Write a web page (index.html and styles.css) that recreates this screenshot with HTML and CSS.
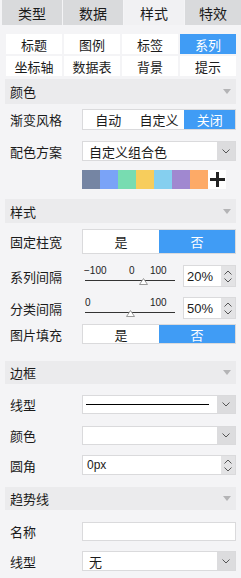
FILE: index.html
```html
<!DOCTYPE html>
<html lang="zh-CN">
<head>
    <meta charset="UTF-8">
    <title>图表样式</title>
    <link rel="stylesheet" href="styles.css">
</head>
<body>
    <div class="tabs">
        <div class="tab">类型</div>
        <div class="tab">数据</div>
        <div class="tab active">样式</div>
        <div class="tab">特效</div>
    </div>

    <div class="panel">
        <div class="subtabs">
            <div class="subtab">标题</div>
            <div class="subtab">图例</div>
            <div class="subtab">标签</div>
            <div class="subtab active">系列</div>
            <div class="subtab">坐标轴</div>
            <div class="subtab">数据表</div>
            <div class="subtab">背景</div>
            <div class="subtab">提示</div>
        </div>

        <!-- 颜色 -->
        <div class="sec-head first">颜色<span class="caret"></span></div>
        <div class="row after-head">
            <div class="label">渐变风格</div>
            <div class="seg h21">
                <span>自动</span><span>自定义</span><span class="on">关闭</span>
            </div>
        </div>
        <div class="row">
            <div class="label">配色方案</div>
            <div class="select h20">
                <div class="val">自定义组合色</div>
                <div class="btn"><svg width="8" height="5" viewBox="0 0 8 5"><path d="M0.5 0.5 L4 4 L7.5 0.5" fill="none" stroke="#555" stroke-width="1"/></svg></div>
            </div>
        </div>
        <div class="swatches">
            <span style="background:#7585a3"></span>
            <span style="background:#7aa3f7"></span>
            <span style="background:#78dcb1"></span>
            <span style="background:#f7cd5c"></span>
            <span style="background:#85cfef"></span>
            <span style="background:#a088d0"></span>
            <span style="background:#fdaa67"></span>
            <span class="add"><svg width="15" height="15" viewBox="0 0 15 15"><rect x="6" y="0" width="3" height="15" fill="#222"/><rect x="0" y="6" width="15" height="3" fill="#222"/></svg></span>
        </div>

        <!-- 样式 -->
        <div class="sec-head">样式<span class="caret"></span></div>
        <div class="row mt6">
            <div class="label">固定柱宽</div>
            <div class="seg h25">
                <span>是</span><span class="on">否</span>
            </div>
        </div>
        <div class="row">
            <div class="label">系列间隔</div>
            <div class="slider-ctrl">
                <div class="slider">
                    <span class="tick" style="left:-1px">−100</span>
                    <span class="tick" style="left:44px">0</span>
                    <span class="tick" style="left:65px">100</span>
                    <div class="track"></div>
                    <svg class="thumb" style="left:54px" width="9" height="7" viewBox="0 0 9 7"><polygon points="0.5,6.5 4.5,0.5 8.5,6.5" fill="#fff" stroke="#999"/></svg>
                </div>
                <div class="num">
                    <div class="v">20%</div>
                    <div class="spin">
                        <svg width="8" height="5" viewBox="0 0 8 5"><path d="M0.5 4.5 L4 1 L7.5 4.5" fill="none" stroke="#555"/></svg>
                        <svg width="8" height="5" viewBox="0 0 8 5"><path d="M0.5 0.5 L4 4 L7.5 0.5" fill="none" stroke="#555"/></svg>
                    </div>
                </div>
            </div>
        </div>
        <div class="row mt10">
            <div class="label">分类间隔</div>
            <div class="slider-ctrl">
                <div class="slider">
                    <span class="tick" style="left:0">0</span>
                    <span class="tick" style="left:65px">100</span>
                    <div class="track"></div>
                    <svg class="thumb" style="left:41px" width="9" height="7" viewBox="0 0 9 7"><polygon points="0.5,6.5 4.5,0.5 8.5,6.5" fill="#fff" stroke="#999"/></svg>
                </div>
                <div class="num">
                    <div class="v">50%</div>
                    <div class="spin">
                        <svg width="8" height="5" viewBox="0 0 8 5"><path d="M0.5 4.5 L4 1 L7.5 4.5" fill="none" stroke="#555"/></svg>
                        <svg width="8" height="5" viewBox="0 0 8 5"><path d="M0.5 0.5 L4 4 L7.5 0.5" fill="none" stroke="#555"/></svg>
                    </div>
                </div>
            </div>
        </div>
        <div class="row mt5">
            <div class="label">图片填充</div>
            <div class="seg h20">
                <span>是</span><span class="on">否</span>
            </div>
        </div>

        <!-- 边框 -->
        <div class="sec-head gap-lg">边框<span class="caret"></span></div>
        <div class="row">
            <div class="label">线型</div>
            <div class="select h19">
                <div class="val line"><div class="stroke"></div></div>
                <div class="btn"><svg width="8" height="5" viewBox="0 0 8 5"><path d="M0.5 0.5 L4 4 L7.5 0.5" fill="none" stroke="#555"/></svg></div>
            </div>
        </div>
        <div class="row mt12">
            <div class="label">颜色</div>
            <div class="select h19">
                <div class="val"></div>
                <div class="btn"><svg width="8" height="5" viewBox="0 0 8 5"><path d="M0.5 0.5 L4 4 L7.5 0.5" fill="none" stroke="#555"/></svg></div>
            </div>
        </div>
        <div class="row mt10">
            <div class="label">圆角</div>
            <div class="num wide h20">
                <div class="v">0px</div>
                <div class="spin">
                    <svg width="8" height="5" viewBox="0 0 8 5"><path d="M0.5 4.5 L4 1 L7.5 4.5" fill="none" stroke="#555"/></svg>
                    <svg width="8" height="5" viewBox="0 0 8 5"><path d="M0.5 0.5 L4 4 L7.5 0.5" fill="none" stroke="#555"/></svg>
                </div>
            </div>
        </div>

        <!-- 趋势线 -->
        <div class="sec-head mt12 h23">趋势线<span class="caret"></span></div>
        <div class="row mt12">
            <div class="label">名称</div>
            <div class="input h19"></div>
        </div>
        <div class="row mt10">
            <div class="label">线型</div>
            <div class="select h20">
                <div class="val">无</div>
                <div class="btn"><svg width="8" height="5" viewBox="0 0 8 5"><path d="M0.5 0.5 L4 4 L7.5 0.5" fill="none" stroke="#555"/></svg></div>
            </div>
        </div>
    </div>
</body>
</html>
```

FILE: styles.css
```css
body {
    margin: 0;
    width: 241px;
    background: #f4f4f6;
    font-family: "Noto Sans CJK SC", "Liberation Sans", sans-serif;
    font-size: 13px;
    color: #1b1b1b;
}
.tabs {
    display: grid;
    grid-template-columns: 60px 60px 60px 1fr;
    gap: 1px;
    padding-left: 2px;
    height: 25px;
}
.tab {
    background: #d9dadc;
    display: flex;
    align-items: center;
    justify-content: center;
    font-size: 14px;
}
.tab.active {
    background: #f1f1f3;
}
.panel {
    padding: 0 5px;
}
.subtabs {
    margin: 9px 0 0 1px;
    display: grid;
    grid-template-columns: repeat(4, 1fr);
    gap: 2px;
}
.subtab {
    height: 20px;
    background: #fff;
    display: flex;
    align-items: center;
    justify-content: center;
}
.subtab.active {
    background: #409cf5;
    color: #fff;
}
.sec-head {
    margin-top: 10px;
    height: 24px;
    background: #ebebed;
    display: flex;
    align-items: center;
    justify-content: space-between;
    padding: 0 5px;
}
.sec-head.first {
    margin-top: 3px;
    height: 25px;
}
.sec-head.gap-lg {
    margin-top: 17px;
    height: 23px;
}
.caret {
    width: 0;
    height: 0;
    border-left: 4px solid transparent;
    border-right: 4px solid transparent;
    border-top: 5px solid #b4b4b6;
}
.row {
    display: flex;
    align-items: center;
    margin-top: 11px;
}
.row.after-head { margin-top: 5px; }
.mt5 { margin-top: 5px; }
.mt6 { margin-top: 6px; }
.mt10 { margin-top: 10px; }
.mt12 { margin-top: 12px; }
.sec-head.h23 { height: 23px; }
.label {
    width: 77px;
    padding-left: 5px;
    box-sizing: border-box;
    flex: none;
}
.h19 { height: 19px; }
.h20 { height: 20px; }
.h21 { height: 21px; }
.h25 { height: 25px; }
.seg, .select, .input, .num {
    flex: 1;
    display: flex;
    border: 1px solid #dadadc;
    background: #fff;
    box-sizing: border-box;
}
.seg span {
    flex: 1;
    display: flex;
    align-items: center;
    justify-content: center;
}
.seg .on {
    background: #409cf5;
    color: #fff;
}
.select .val {
    flex: 1;
    display: flex;
    align-items: center;
    padding-left: 6px;
}
.select .val.line {
    padding: 0 8px 0 3px;
}
.stroke {
    flex: 1;
    height: 1.5px;
    background: #000;
}
.select .btn {
    width: 18px;
    background: #dcdcde;
    display: flex;
    align-items: center;
    justify-content: center;
}
.swatches {
    display: flex;
    margin: 9px 0 0 77px;
    height: 19px;
}
.swatches span {
    width: 18px;
}
.swatches .add {
    background: #fff;
    display: flex;
    align-items: center;
    justify-content: center;
}
.slider-ctrl {
    flex: 1;
    display: flex;
    align-items: center;
}
.slider {
    position: relative;
    width: 90px;
    height: 22px;
    margin-left: 3px;
}
.tick {
    position: absolute;
    top: 1px;
    font-family: "Liberation Sans", sans-serif;
    font-size: 10px;
    line-height: 10px;
    color: #222;
}
.track {
    position: absolute;
    left: 0;
    right: 0;
    top: 15px;
    height: 1px;
    background: #333;
}
.thumb {
    position: absolute;
    top: 13px;
}
.num {
    height: 22px;
    margin-left: 8px;
}
.num.wide {
    margin-left: 0;
    height: 20px;
}
.num .v {
    flex: 1;
    display: flex;
    align-items: center;
    padding-left: 3px;
    font-family: "Liberation Sans", sans-serif;
    font-size: 13px;
}
.num.wide .v {
    padding-left: 4px;
    font-size: 12px;
}
.num .spin {
    width: 14px;
    background: #e3e3e5;
    display: flex;
    flex-direction: column;
    align-items: center;
    justify-content: center;
    gap: 3px;
}
```
